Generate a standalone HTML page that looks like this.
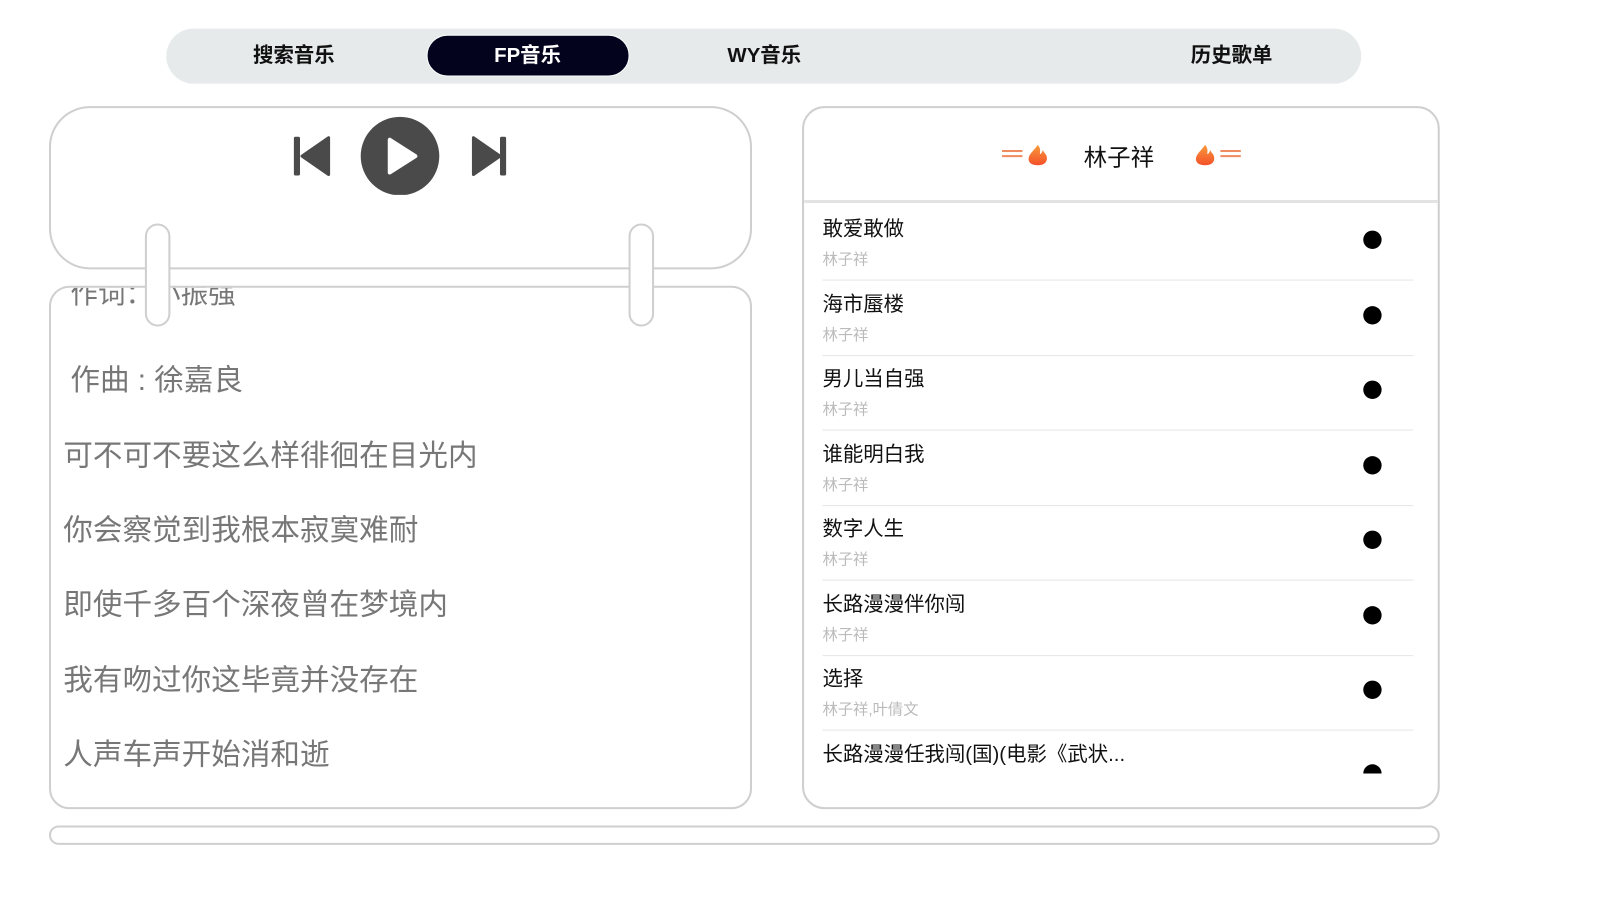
<!DOCTYPE html>
<html><head><meta charset="utf-8"><style>
*{margin:0;padding:0;box-sizing:border-box}
body{width:1600px;height:900px;background:#fff;font-family:"Liberation Sans","Noto Sans CJK SC",sans-serif;position:relative;overflow:hidden}
#w{position:absolute;left:0;top:0;width:1600px;height:900px;transform:scale(1.0204);transform-origin:0 0}
.abs{position:absolute}
.tabs{left:163px;top:28px;width:1171px;height:54px;background:#e6eaea;border-radius:27px}
.tab{position:absolute;top:0;height:54px;line-height:54px;font-size:20px;font-weight:bold;color:#111;transform:translateX(-50%);white-space:nowrap}
.pill{position:absolute;left:255px;top:6px;width:199px;height:41px;background:#03031e;border-radius:21px;border:1px solid #fff}
.card{border:2px solid #cfcfcf}
.ring{width:25px;height:101px;border:2px solid #cfcfcf;border-radius:13px;background:#fff}
.lyr{position:absolute;font-size:29px;color:#777;white-space:nowrap}
.row{position:absolute;left:18px;width:579px;height:74px;border-bottom:1px solid #e6e6e6}
.t{position:absolute;left:0;top:7px;font-size:20px;color:#111;white-space:nowrap}
.a{position:absolute;left:0;top:42px;font-size:15px;color:#bbb;white-space:nowrap}
.dot{position:absolute;left:530px;top:25px;width:18px;height:18px;border-radius:50%;background:#000}
</style></head><body><div id="w">
<div class="abs tabs">
 <div class="pill"></div>
 <div class="tab" style="left:125px">搜索音乐</div>
 <div class="tab" style="left:354px;color:#fff">FP音乐</div>
 <div class="tab" style="left:586px">WY音乐</div>
 <div class="tab" style="left:1044px">历史歌单</div>
</div>

<div class="abs card" style="left:48px;top:104px;width:689px;height:160px;border-radius:40px">
 <svg class="abs" style="left:236px;top:5px" width="220" height="80" viewBox="0 0 220 80">
  <rect x="2" y="23" width="6" height="38" rx="1.5" fill="#4a4a4a"/>
  <path d="M36 24 L36 60 L10 42 Z" fill="#4a4a4a" stroke="#4a4a4a" stroke-width="3" stroke-linejoin="round"/>
  <circle cx="106" cy="42" r="38.5" fill="#4a4a4a"/>
  <path d="M96 26 L96 58 L121 42 Z" fill="#fff" stroke="#fff" stroke-width="4" stroke-linejoin="round"/>
  <path d="M178 24 L178 60 L204 42 Z" fill="#4a4a4a" stroke="#4a4a4a" stroke-width="3" stroke-linejoin="round"/>
  <rect x="204" y="23" width="6" height="38" rx="1.5" fill="#4a4a4a"/>
 </svg>
</div>

<div class="abs card" style="left:48px;top:280px;width:689px;height:513px;border-radius:20px;overflow:hidden">
 <div class="lyr" style="left:19px;top:-16px;font-size:27px;clip-path:inset(16px 0 0 0)">作词：小振强</div>
 <div class="lyr" style="left:19px;top:67px">作曲 : 徐嘉良</div>
 <div class="lyr" style="left:12px;top:141px">可不可不要这么样徘徊在目光内</div>
 <div class="lyr" style="left:12px;top:214px">你会察觉到我根本寂寞难耐</div>
 <div class="lyr" style="left:12px;top:287px">即使千多百个深夜曾在梦境内</div>
 <div class="lyr" style="left:12px;top:361px">我有吻过你这毕竟并没存在</div>
 <div class="lyr" style="left:12px;top:434px">人声车声开始消和逝</div>
</div>
<div class="abs ring" style="left:142px;top:219px"></div>
<div class="abs ring" style="left:616px;top:219px"></div>

<div class="abs card" style="left:786px;top:104px;width:625px;height:689px;border-radius:22px;overflow:hidden">
 <div class="abs" style="left:0;top:0;width:100%;height:93px;border-bottom:3px solid #e3e3e3">
  <div class="abs" style="left:274px;top:29px;font-size:23px;color:#111">林子祥</div>
  <svg class="abs" style="left:192px;top:33px" width="50" height="24"><defs><linearGradient id="g" x1="0" y1="0" x2="0" y2="1"><stop offset="0" stop-color="#f89a3c"/><stop offset="1" stop-color="#f4502a"/></linearGradient></defs><rect x="2" y="8" width="20" height="2" fill="#f08a60"/><rect x="2" y="13" width="20" height="2" fill="#f08a60"/><path d="M37 3 C33 9 28 12 28 17 C28 21 32 23 37 23 C42 23 46 21 46 16 C46 12 43 11 42 8 C41 11 40 12 39 12 C40 8 39 5 37 3Z" fill="url(#g)"/></svg>
  <svg class="abs" style="left:380px;top:33px" width="50" height="24"><path d="M13 3 C9 9 4 12 4 17 C4 21 8 23 13 23 C18 23 22 21 22 16 C22 12 19 11 18 8 C17 11 16 12 15 12 C16 8 15 5 13 3Z" fill="url(#g)"/><rect x="28" y="8" width="20" height="2" fill="#f08a60"/><rect x="28" y="13" width="20" height="2" fill="#f08a60"/></svg>
 </div>
 <div class="abs" style="left:0;top:95px;width:100%;height:557px;overflow:hidden">
  <div class="row" style="top:0"><div class="t">敢爱敢做</div><div class="a">林子祥</div><div class="dot"></div></div>
  <div class="row" style="top:74px"><div class="t">海市蜃楼</div><div class="a">林子祥</div><div class="dot"></div></div>
  <div class="row" style="top:147px"><div class="t">男儿当自强</div><div class="a">林子祥</div><div class="dot"></div></div>
  <div class="row" style="top:221px"><div class="t">谁能明白我</div><div class="a">林子祥</div><div class="dot"></div></div>
  <div class="row" style="top:294px"><div class="t">数字人生</div><div class="a">林子祥</div><div class="dot"></div></div>
  <div class="row" style="top:368px"><div class="t">长路漫漫伴你闯</div><div class="a">林子祥</div><div class="dot"></div></div>
  <div class="row" style="top:441px"><div class="t">选择</div><div class="a">林子祥,叶倩文</div><div class="dot"></div></div>
  <div class="row" style="top:515px;border:0"><div class="t">长路漫漫任我闯(国)(电影《武状...</div><div class="dot" style="top:33px"></div></div>
 </div>
</div>

<div class="abs card" style="left:48px;top:809px;width:1363px;height:19px;border-radius:10px"></div>
</div></body></html>
